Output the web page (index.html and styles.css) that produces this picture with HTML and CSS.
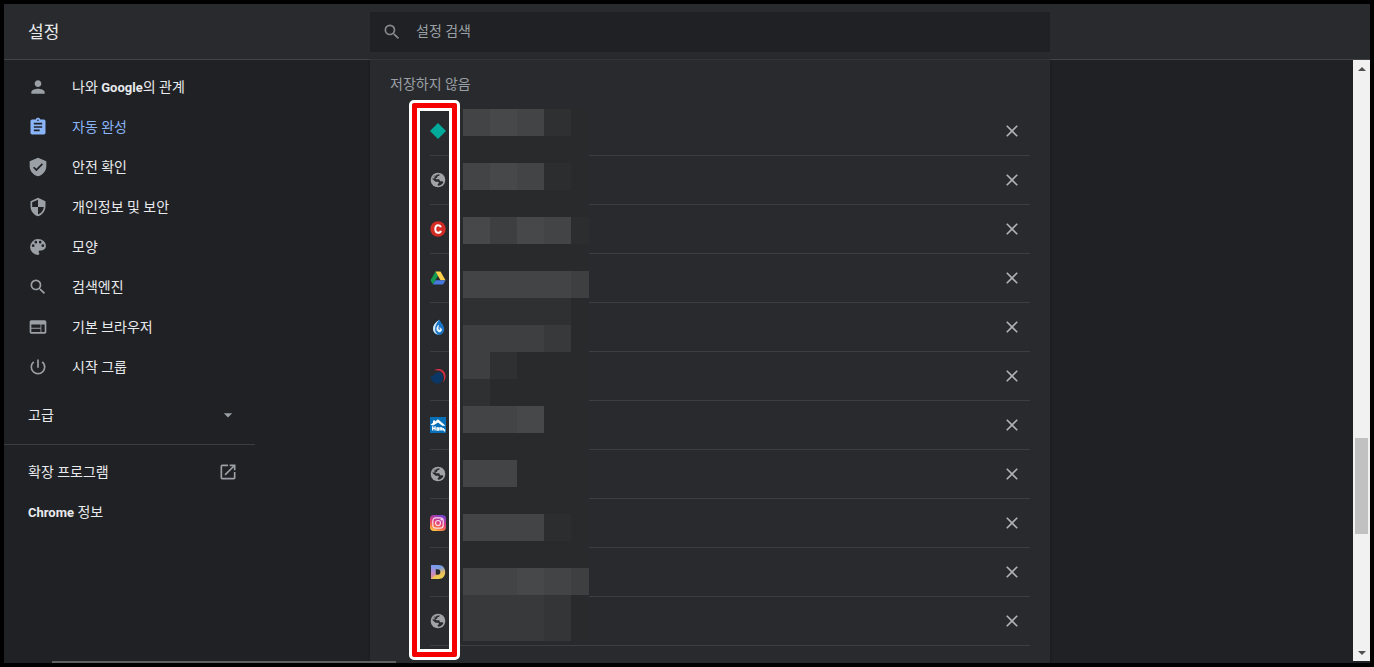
FILE: index.html
```html
<!DOCTYPE html>
<html lang="ko">
<head>
<meta charset="utf-8">
<title>설정</title>
<link rel="stylesheet" href="styles.css">
</head>
<body>
<svg class="defs" aria-hidden="true">
  <symbol id="search" viewBox="0 0 24 24"><path d="M15.5 14h-.79l-.28-.27A6.47 6.47 0 0 0 16 9.5 6.5 6.5 0 1 0 9.5 16c1.61 0 3.09-.59 4.23-1.57l.27.28v.79l5 4.99L20.49 19l-4.99-5zm-6 0C7.01 14 5 11.99 5 9.5S7.01 5 9.5 5 14 7.01 14 9.5 11.99 14 9.5 14z"/></symbol>
  <symbol id="close" viewBox="0 0 24 24"><path d="M19 6.41L17.59 5 12 10.59 6.41 5 5 6.41 10.59 12 5 17.59 6.41 19 12 13.41 17.59 19 19 17.59 13.41 12z"/></symbol>
  <symbol id="globe" viewBox="0 0 16 16"><circle cx="8" cy="8" r="7.300" fill="#a0a3a8"/><path d="M2.400 6.900C3 5 4.200 3.600 5.600 3L9.600 2.300 9.300 3.700 7.400 4.300 7.200 5.600 5.600 6.200 6 7.200H9.200L10 9.200H12.600L13.300 10.200C12.300 12.300 10.300 13.700 8 13.700L7.600 12.200 9 11 8.300 9.700H5.600z" fill="#292a2d"/><path d="M2.600 6.400C3.400 4.300 5 3 6.800 2.700L5.600 4.200 4.400 4.600 4.600 6.400z" fill="#a0a3a8"/></symbol>
</svg>
<div class="app">
  <header class="header">
    <h1 class="title">설정</h1>
    <label class="search"><svg class="icon"><use href="#search"/></svg><input class="search-input" type="text" placeholder="설정 검색" aria-label="설정 검색"></label>
  </header>
  <div class="body">
    <nav class="sidebar">
      <a class="item" href="#people"><svg class="icon" viewBox="0 0 24 24"><path d="M12 12c2.210 0 4-1.790 4-4s-1.790-4-4-4-4 1.790-4 4 1.790 4 4 4zm0 2c-2.670 0-8 1.340-8 4v2h16v-2c0-2.660-5.330-4-8-4z"/></svg><span>나와 <span class="latin">Google</span>의 관계</span></a>
      <a class="item active" href="#autofill"><svg class="icon" viewBox="0 0 24 24"><path d="M19 3h-4.180C14.400 1.840 13.300 1 12 1s-2.400.84-2.820 2H5c-1.100 0-2 .9-2 2v14c0 1.100.9 2 2 2h14c1.100 0 2-.9 2-2V5c0-1.100-.9-2-2-2zm-7 0c.55 0 1 .45 1 1s-.45 1-1 1-1-.45-1-1 .45-1 1-1zm2 14H7v-2h7v2zm3-4H7v-2h10v2zm0-4H7V7h10v2z"/></svg><span>자동 완성</span></a>
      <a class="item" href="#safety"><svg class="icon" viewBox="0 0 24 24"><path d="M12 1L2 5v6c0 5.550 4.200 10.740 10 12 5.800-1.260 10-6.450 10-12V5L12 1zm-2 16l-4-4 1.410-1.410L10 14.170l6.590-6.590L18 9l-8 8z"/></svg><span>안전 확인</span></a>
      <a class="item" href="#privacy"><svg class="icon" viewBox="0 0 24 24"><path d="M12 1L3 5v6c0 5.550 3.840 10.740 9 12 5.160-1.260 9-6.450 9-12V5l-9-4zm0 10.990h7c-.53 4.120-3.280 7.790-7 8.940V12H5V6.300l7-3.110v8.800z"/></svg><span>개인정보 및 보안</span></a>
      <a class="item" href="#appearance"><svg class="icon" viewBox="0 0 24 24"><path d="M12 2.500a9.500 9.500 0 0 0 0 19c.9 0 1.600-.7 1.600-1.600 0-.4-.2-.8-.4-1.100-.3-.3-.4-.6-.4-1 0-.9.7-1.600 1.600-1.600h1.900c2.900 0 5.200-2.400 5.200-5.300 0-4.600-4.200-8.400-9.500-8.400zM6.200 12a1.600 1.600 0 1 1 0-3.200 1.600 1.600 0 0 1 0 3.200zm3.200-4.200a1.600 1.600 0 1 1 0-3.200 1.600 1.600 0 0 1 0 3.200zm5.200 0a1.600 1.600 0 1 1 0-3.200 1.600 1.600 0 0 1 0 3.200zm3.200 4.200a1.600 1.600 0 1 1 0-3.200 1.600 1.600 0 0 1 0 3.200z"/></svg><span>모양</span></a>
      <a class="item" href="#engine"><svg class="icon"><use href="#search"/></svg><span>검색엔진</span></a>
      <a class="item" href="#default"><svg class="icon" viewBox="0 0 24 24"><path d="M20 4H4c-1.100 0-1.990.9-1.990 2L2 18c0 1.100.9 2 2 2h16c1.100 0 2-.9 2-2V6c0-1.100-.9-2-2-2zm-5 14H4v-4h11v4zm0-5H4V9h11v4zm5 5h-4V9h4v9z"/></svg><span>기본 브라우저</span></a>
      <a class="item" href="#startup"><svg class="icon" viewBox="0 0 24 24"><path d="M13 3h-2v10h2V3zm4.830 2.170l-1.420 1.420A6.920 6.920 0 0 1 19 12a7 7 0 1 1-11.420-5.420L6.170 5.170A8.930 8.930 0 0 0 3 12a9 9 0 0 0 18 0c0-2.740-1.230-5.180-3.170-6.830z"/></svg><span>시작 그룹</span></a>
      <button class="item advanced" type="button"><span>고급</span><svg class="icon" viewBox="0 0 24 24"><path d="M7 10l5 5 5-5z"/></svg></button>
      <hr class="divider">
      <a class="item between" href="#extensions"><span>확장 프로그램</span><svg class="icon" viewBox="0 0 24 24"><path d="M19 19H5V5h7V3H5a2 2 0 0 0-2 2v14a2 2 0 0 0 2 2h14c1.100 0 2-.9 2-2v-7h-2v7zM14 3v2h3.590l-9.830 9.830 1.410 1.410L19 6.410V10h2V3h-7z"/></svg></a>
      <a class="item" href="#about"><span><span class="latin">Chrome</span> 정보</span></a>
    </nav>
    <main class="panel">
      <h2 class="section-title">저장하지 않음</h2>
      <div class="listing">
        <ul class="sites">
          <li class="site"><svg class="favicon" viewBox="0 0 16 16"><path d="M8 0l8 8-8 8-8-8z" fill="#00ab9b"/></svg><button class="remove" type="button" aria-label="삭제"><svg class="icon"><use href="#close"/></svg></button></li>
          <li class="site"><svg class="favicon"><use href="#globe"/></svg><button class="remove" type="button" aria-label="삭제"><svg class="icon"><use href="#close"/></svg></button></li>
          <li class="site"><svg class="favicon" viewBox="0 0 16 16"><circle cx="8" cy="8" r="7.700" fill="#d52b25"/><path d="M10.900 6.200C10.500 4.900 9.600 4.200 8.200 4.200 6.300 4.200 5.300 5.600 5.300 8s1 3.800 2.900 3.800c1.400 0 2.400-.8 2.700-2.100" fill="none" stroke="#fff" stroke-width="2"/></svg><button class="remove" type="button" aria-label="삭제"><svg class="icon"><use href="#close"/></svg></button></li>
          <li class="site"><svg class="favicon" viewBox="0 0 16 16"><path d="M5.500 1.500 8 5.800 3 14.400.5 10.200z" fill="#149a50"/><path d="M5.500 1.500h5l5 8.700h-5z" fill="#ffd04b"/><path d="M5.500 10.200h10L13 14.500H3z" fill="#4779de"/></svg><button class="remove" type="button" aria-label="삭제"><svg class="icon"><use href="#close"/></svg></button></li>
          <li class="site"><svg class="favicon" viewBox="0 0 16 16"><path d="M9.500.5C6 3 3 6 3 10.200a5.600 5.600 0 0 0 11.200.3c0-3-1.600-5.500-3.200-7z" fill="#1c74c4"/><path d="M9 1C5 3.500 2.800 6.500 3 10.200c.2 3 2.500 5 5.400 5.200-2.200-1-3.400-2.800-3.300-5.200C5.100 7 6.800 4 9 1z" fill="#d6ebfa"/><path d="M8.400 6.200C6.800 8 6.400 10 7.200 11.600c1 1.900 3.600 1.600 4.300-.1.500-1.500-.6-2.700-1.900-2.500 1.100.3 1.300 1.500.4 1.900-1 .4-1.900-.3-1.900-1.500 0-1.200.3-2.300.3-3.200z" fill="#f4fbff" stroke="#f4fbff" stroke-width=".7"/></svg><button class="remove" type="button" aria-label="삭제"><svg class="icon"><use href="#close"/></svg></button></li>
          <li class="site"><svg class="favicon" viewBox="0 0 16 16"><path d="M.5 7.500C2.500 9.800 3.800 5.500 7 4.500c3.500-.7 6 1.600 6 4.700 0 4-2.500 6.500-5.800 6.300C3.200 15.200.6 12 .5 7.500z" fill="#0a3765"/><path d="M4 2.500C9-.9 15.700 2 15.500 8.400c-.1 2.400-1 4.500-2.500 6.100C15.500 8.500 13.500 1.200 4 2.500z" fill="#d32e45"/></svg><button class="remove" type="button" aria-label="삭제"><svg class="icon"><use href="#close"/></svg></button></li>
          <li class="site"><svg class="favicon" viewBox="0 0 16 16"><path fill="#0870b8" d="M0 0h16v16H0z"/><path d="M.5 7.700 3 5.800V3.500h2v1L8 2.200l7.500 6.600h-3.200L8 5.400 3.200 8.600z" fill="#fff"/><path d="M2.700 9.200v4.300M5.100 9.200v4.300M2.700 11.300h2.400M7 11h1.600v2H7zM10.200 13.500V11h1.500v2.500M13.200 11v1.800h1.300v1.700" fill="none" stroke="#fff" stroke-width="1.300"/></svg><button class="remove" type="button" aria-label="삭제"><svg class="icon"><use href="#close"/></svg></button></li>
          <li class="site"><svg class="favicon"><use href="#globe"/></svg><button class="remove" type="button" aria-label="삭제"><svg class="icon"><use href="#close"/></svg></button></li>
          <li class="site"><svg class="favicon" viewBox="0 0 16 16"><defs><linearGradient id="ig" x1="0.700" y1="0" x2="0.300" y2="1"><stop offset="0" stop-color="#7542d5"/><stop offset=".45" stop-color="#dd3981"/><stop offset=".75" stop-color="#f66a43"/><stop offset="1" stop-color="#ffc94a"/></linearGradient></defs><rect width="16" height="16" rx="4" fill="url(#ig)"/><g fill="none" stroke="#fbdde8" stroke-width="1.200"><rect x="2.800" y="2.800" width="10.400" height="10.400" rx="3"/><circle cx="8" cy="8" r="2.500"/></g><circle cx="11.200" cy="4.800" r=".8" fill="#fff"/></svg><button class="remove" type="button" aria-label="삭제"><svg class="icon"><use href="#close"/></svg></button></li>
          <li class="site"><svg class="favicon" viewBox="0 0 16 16"><defs><linearGradient id="dg" x1="0.300" y1="0" x2="0.600" y2="1"><stop offset="0" stop-color="#6f9df4"/><stop offset=".3" stop-color="#829fda"/><stop offset=".65" stop-color="#e9bd5d"/><stop offset="1" stop-color="#f1d64d"/></linearGradient><linearGradient id="dl" x1="0" y1="0" x2="0" y2="1"><stop offset="0" stop-color="#6f9df4"/><stop offset=".5" stop-color="#b88bce"/><stop offset="1" stop-color="#f18b8f"/></linearGradient></defs><path d="M1 1h7.500c4.200 0 6.700 2.800 6.700 7s-2.500 7-6.700 7H1zm4.500 4.200v5.600H8c1.500 0 2.300-1 2.300-2.800S9.500 5.200 8 5.200z" fill="url(#dg)" fill-rule="evenodd"/><path d="M1 1h4.500v9.800L1 15z" fill="url(#dl)"/></svg><button class="remove" type="button" aria-label="삭제"><svg class="icon"><use href="#close"/></svg></button></li>
          <li class="site"><svg class="favicon"><use href="#globe"/></svg><button class="remove" type="button" aria-label="삭제"><svg class="icon"><use href="#close"/></svg></button></li>
        </ul>
        <svg class="mosaic" viewBox="0 0 140 540" aria-hidden="true">
          <path fill="#292a2c" d="M0 0h140v536H0z"/>
          <path fill="#2f3032" d="M95 2h27v27H95zM14 191h108v27H14zM41 245h27v27H41zM14 272h27v27H14z"/>
          <path fill="#2c2d2f" d="M95 56h27v27H95zM122 110h18v27h-18zM95 407h27v27H95z"/>
          <path fill="#434446" d="M14 2h81v27H14zM14 56h81v27H14zM14 110h108v27H14zM14 164h126v27H14zM14 299h81v27H14zM14 353h54v27H14zM14 407h81v27H14zM14 461h126v27H14z"/>
          <path fill="#474849" d="M41 2h27v27H41zM41 56h27v27H41zM14 110h27v27H14zM68 110h27v27H68zM68 299h27v27H68zM68 461h27v27H68z"/>
          <path fill="#3e3f41" d="M14 218h81v27H14zM14 245h27v27H14zM41 110h27v27H41zM122 164h18v27h-18zM122 461h18v27h-18z"/>
          <path fill="#38393b" d="M95 218h27v27H95zM14 488h81v46H14z"/>
          <path fill="#343537" d="M95 488h27v46H95z"/>
        </svg>
        <div class="highlight"><div class="highlight-inner"></div></div>
      </div>
    </main>
    <div class="scrollbar"><i class="arrow up"></i><i class="before"></i><i class="thumb"></i><i class="after"></i><i class="arrow down"></i></div>
  </div>
  <div class="bottom-line"></div>
</div>
</body>
</html>
```
FILE: styles.css
```css
* { box-sizing: border-box; }
body {
  margin: 0;
  background: #000;
  color: #e8eaed;
  font: 400 14px/20px Roboto, "Noto Sans CJK KR", sans-serif;
}
.defs { position: absolute; width: 0; height: 0; }
.app {
  position: relative;
  display: flex;
  flex-direction: column;
  height: 100vh;
  border: 4px solid #000;
  overflow: hidden;
  background: #202124;
}
.header, .body {
  display: grid;
  grid-template-columns: 366fr minmax(0, 680px) 320fr;
}
.header {
  flex: none;
  height: 56px;
  align-items: center;
  background: #292a2d;
  border-bottom: 1px solid #434446;
}
.body { flex: 1; min-height: 0; }
.title { margin: 0; padding-left: 24px; font-size: 17px; font-weight: 400; line-height: 24px; }
.search {
  display: flex;
  align-items: center;
  gap: 14px;
  height: 40px;
  padding: 0 12px;
  background: #202124;
}
.search-input {
  flex: 1;
  padding: 0 0 2px;
  border: 0;
  outline: 0;
  background: none;
  color: #e8eaed;
  font: inherit;
}
.search-input::placeholder { color: #9aa0a6; opacity: 1; }
.icon { flex: none; width: 20px; height: 20px; fill: #9aa0a6; }
.search .icon { fill: #85888c; }
.sidebar { padding-top: 7px; }
.item {
  display: flex;
  align-items: center;
  gap: 24px;
  height: 40px;
  padding-left: 24px;
  color: #e8eaed;
  text-decoration: none;
}
.latin { font-size: 13px; font-weight: 700; }
.active { color: #8ab4f8; }
.active .icon { fill: #8ab4f8; }
.advanced, .between { width: 234px; justify-content: space-between; }
.advanced {
  height: 56px;
  padding: 0 0 0 24px;
  border: 0;
  background: none;
  font: inherit;
}
.divider { width: 251px; height: 1px; margin: 1px 0 7px; border: 0; background: #3c3d40; }
.panel {
  padding: 14px 20px 0;
  overflow: hidden;
  background: #292a2d;
  box-shadow: 0 0 2px #151618;
}
.section-title { margin: 0; color: #9aa0a6; font-size: 14px; font-weight: 400; line-height: 20px; }
.listing { position: relative; margin-top: 13px; padding-left: 40px; }
.sites { margin: 0; padding: 0; list-style: none; }
.site {
  display: flex;
  align-items: center;
  justify-content: space-between;
  height: 49px;
  padding-right: 8px;
  border-bottom: 1px solid #3d3e40;
}
.favicon { width: 16px; height: 16px; }
.remove { display: flex; padding: 0; border: 0; background: none; }
.remove .icon { fill: #adb0b4; }
.mosaic { position: absolute; top: 0; left: 59px; width: 140px; height: 540px; }
.highlight {
  position: absolute;
  top: -7px;
  left: 19px;
  width: 51px;
  height: 560px;
  padding: 5px;
  border: 3px solid #fff;
  border-radius: 5px;
  box-shadow: inset 0 0 0 5px #f40000;
}
.highlight-inner { height: 100%; border: 3px solid #fff; }
.scrollbar {
  display: flex;
  flex-direction: column;
  justify-self: end;
  align-items: center;
  width: 17px;
  margin-bottom: 2px;
  background: #f1f1f1;
}
.arrow { display: grid; flex: none; place-items: center; width: 17px; height: 17px; }
.arrow::before { content: ""; border: 4px solid transparent; }
.up::before { border-top: 0; border-bottom-color: #505050; }
.down::before { border-bottom: 0; border-top-color: #505050; }
.before { flex: 361; }
.thumb { flex: 96; width: 13px; background: #c1c1c1; }
.after { flex: 110; }
.bottom-line {
  position: absolute;
  bottom: 0;
  left: 48px;
  width: 344px;
  height: 2px;
  background: #5f6062;
}
```
